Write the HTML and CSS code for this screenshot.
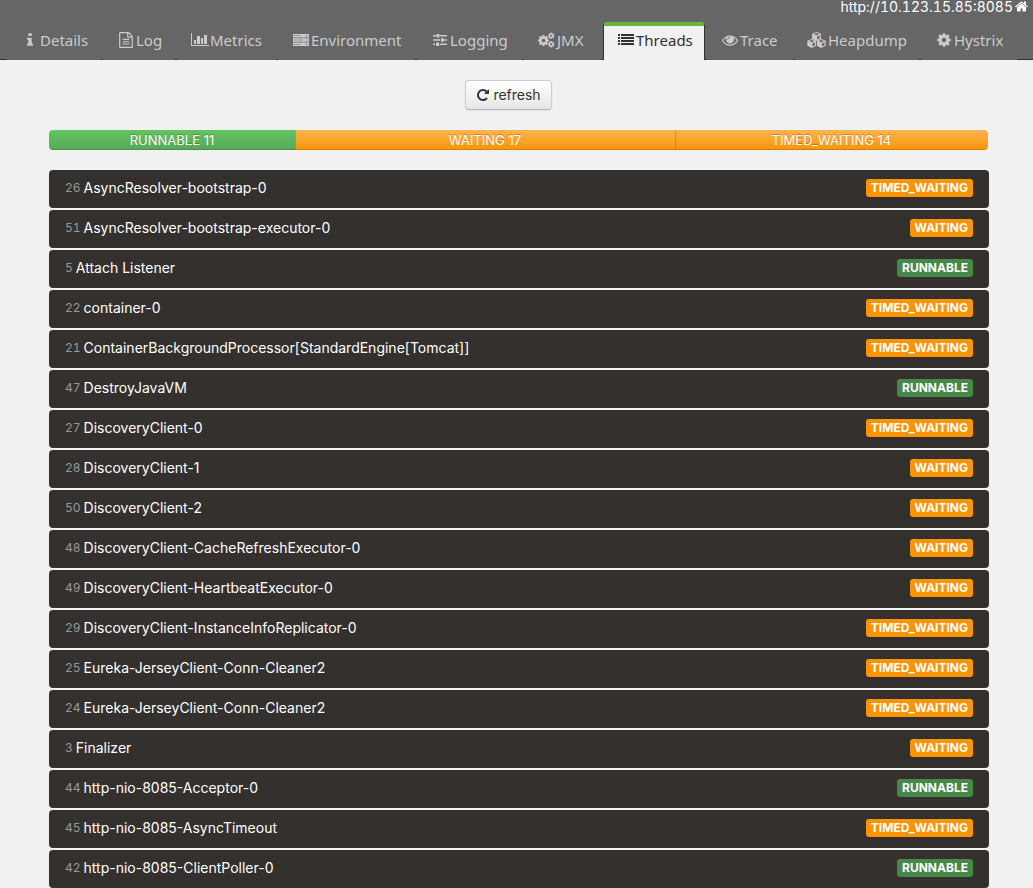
FILE: index.html
```html
<!DOCTYPE html>
<html lang="en">
<head>
<meta charset="utf-8">
<title>Threads</title>
<link rel="stylesheet" href="styles.css">
</head>
<body>
<svg class="sprite" aria-hidden="true">
  <symbol id="home" viewBox="64 150 1664 1500"><path d="M1472 992v480q0 26-19 45t-45 19h-384v-384h-256v384h-384q-26 0-45-19t-19-45v-480q0-1 .5-3t.5-3l575-474 575 474q1 2 1 6zm223-69l-62 74q-8 9-21 11h-3q-13 0-21-7l-692-577-692 577q-12 8-24 7-13-2-21-11l-62-74q-8-10-7-23.5t11-21.5l719-599q32-26 76-26t76 26l244 204v-195q0-14 9-23t23-9h192q14 0 23 9t9 23v408l219 182q10 8 11 21.5t-7 23.5z"/></symbol>
  <symbol id="info" viewBox="0 0 1792 1792"><path d="M1216 1344v128q0 26-19 45t-45 19h-512q-26 0-45-19t-19-45v-128q0-26 19-45t45-19h64v-384h-64q-26 0-45-19t-19-45v-128q0-26 19-45t45-19h384q26 0 45 19t19 45v576h64q26 0 45 19t19 45zm-128-1152v192q0 26-19 45t-45 19h-256q-26 0-45-19t-19-45v-192q0-26 19-45t45-19h256q26 0 45 19t19 45z"/></symbol>
  <symbol id="file" viewBox="0 0 1792 1792"><path d="M1596 380q28 28 48 76t20 88v1152q0 40-28 68t-68 28h-1344q-40 0-68-28t-28-68v-1600q0-40 28-68t68-28h896q40 0 88 20t76 48zm-444-244v376h376q-10-29-22-41l-313-313q-12-12-41-22zm384 1528v-1024h-416q-40 0-68-28t-28-68v-416h-768v1536h1280zm-1024-864q0-14 9-23t23-9h704q14 0 23 9t9 23v64q0 14-9 23t-23 9h-704q-14 0-23-9t-9-23v-64zm736 224q14 0 23 9t9 23v64q0 14-9 23t-23 9h-704q-14 0-23-9t-9-23v-64q0-14 9-23t23-9h704zm0 256q14 0 23 9t9 23v64q0 14-9 23t-23 9h-704q-14 0-23-9t-9-23v-64q0-14 9-23t23-9h704z"/></symbol>
  <symbol id="chart" viewBox="0 0 18 16"><path d="M0 1h1v12h17v1H0zM3 8h2v4H3zM6 4h3v8H6zM10 6h2v6h-2zM13 3h3v9h-3z"/></symbol>
  <symbol id="server" viewBox="0 0 16 16"><path fill-rule="evenodd" d="M0 2h16v3.500H0zM0 6.200h16v3.600H0zM0 10.500h16V14H0zM1 3.500v.6h7v-.6zM1 7.700v.6h9v-.6zM1 12v.6h7V12zM13 3.200v1.200h1.400V3.200zM13 7.400v1.200h1.400V7.400zM13 11.700v1.200h1.400v-1.200z"/></symbol>
  <symbol id="sliders" viewBox="0 0 16 16"><path d="M1 3h3v1.500H1zM8 3h7v1.500H8zM4.500 2h3v3.500h-3zM1 7.300h7v1.500H1zM12.500 7.300H15v1.500h-2.500zM9 6.300h3v3.500H9zM1 11.600h2v1.500H1zM7.500 11.600H15v1.500H7.500zM4 10.600h3v3.500H4z"/></symbol>
  <symbol id="cog" viewBox="0 0 1792 1792"><path d="M1152 896q0-106-75-181t-181-75-181 75-75 181 75 181 181 75 181-75 75-181zm512-109v222q0 12-8 23t-20 13l-185 28q-19 54-39 91 35 50 107 138 10 12 10 25t-9 23q-27 37-99 108t-94 71q-12 0-26-9l-138-108q-44 23-91 38-16 136-29 186-7 28-36 28h-222q-14 0-24.500-8.500t-11.500-21.500l-28-184q-49-16-90-37l-141 107q-10 9-25 9-14 0-25-11-126-114-165-168-7-10-7-23 0-12 8-23 15-21 51-66.500t54-70.500q-27-50-41-99l-183-27q-13-2-21-12.500t-8-23.500v-222q0-12 8-23t19-13l186-28q14-46 39-92-40-57-107-138-10-12-10-24 0-10 9-23 26-36 98.500-107.500t94.500-71.500q13 0 26 10l138 107q44-23 91-38 16-136 29-186 7-28 36-28h222q14 0 24.500 8.500t11.500 21.500l28 184q49 16 90 37l142-107q9-9 24-9 13 0 25 10 129 119 165 170 7 8 7 22 0 12-8 23-15 21-51 66.500t-54 70.500q26 50 41 98l183 28q13 2 21 12.500t8 23.500z"/></symbol>
  <symbol id="cogs" viewBox="0 0 18 16"><use href="#cog" x="-1" y="2" width="13" height="13"/><use href="#cog" x="9.500" y="0" width="7.500" height="7.500"/><use href="#cog" x="9.500" y="8.500" width="7.500" height="7.500"/></symbol>
  <symbol id="list" viewBox="0 0 16 16"><path d="M0 2h2v2H0zM3 2h13v2H3zM0 5h2v2H0zM3 5h13v2H3zM0 8h2v2H0zM3 8h13v2H3zM0 11h2v2H0zM3 11h13v2H3z"/></symbol>
  <symbol id="eye" viewBox="0 0 1792 1792"><path d="M1664 960q-152-236-381-353 61 104 61 225 0 185-131.500 316.500t-316.500 131.500-316.500-131.500-131.500-316.500q0-121 61-225-229 117-381 353 133 205 333.500 326.500t434.500 121.500 434.500-121.500 333.500-326.500zm-720-384q0-20-14-34t-34-14q-125 0-214.500 89.500t-89.500 214.500q0 20 14 34t34 14 34-14 14-34q0-86 61-147t147-61q20 0 34-14t14-34zm848 384q0 34-20 69-140 230-376.500 368.500t-499.500 138.500-499.500-139-376.500-368q-20-35-20-69t20-69q140-229 376.500-368t499.500-139 499.500 139 376.500 368q20 35 20 69z"/></symbol>
  <symbol id="cube" viewBox="0 0 10 10"><path fill-rule="evenodd" d="M5 0l4.900 2v5.500L5 10 .1 7.500V2zM5 1.100L2 2.300 5 3.600l3-1.300zM5.700 5v3.300l2.900-1.500V3.700z"/></symbol>
  <symbol id="cubes" viewBox="0 0 20 16"><use href="#cube" x="5" y="0" width="9" height="9"/><use href="#cube" x="0" y="7" width="9.500" height="9"/><use href="#cube" x="9.500" y="7" width="9.500" height="9"/></symbol>
  <symbol id="repeat" viewBox="0 0 1792 1792"><path d="M1664 256v448q0 26-19 45t-45 19h-448q-42 0-59-40-17-39 14-69l138-138q-148-137-349-137-104 0-198.500 40.500t-163.500 109.500-109.500 163.500-40.500 198.500 40.500 198.500 109.500 163.500 163.500 109.500 198.500 40.500q119 0 225-52t179-147q7-10 23-12 15 0 25 9l137 138q9 8 9.500 20.500t-7.500 22.500q-109 132-264 204.500t-327 72.500q-156 0-298-61t-245-164-164-245-61-298 61-298 164-245 245-164 298-61q147 0 284.500 55.500t244.500 156.500l130-129q29-31 70-14 39 17 39 59z"/></symbol>
</svg>
<header class="header">
  <a class="instance" href="#">http://10.123.15.85:8085<svg class="home-icon"><use href="#home"/></svg></a>
  <nav class="tabs">
    <a class="tab" href="#"><svg class="icon"><use href="#info"/></svg>Details</a>
    <a class="tab" href="#"><svg class="icon"><use href="#file"/></svg>Log</a>
    <a class="tab" href="#"><svg class="icon"><use href="#chart"/></svg>Metrics</a>
    <a class="tab" href="#"><svg class="icon"><use href="#server"/></svg>Environment</a>
    <a class="tab" href="#"><svg class="icon"><use href="#sliders"/></svg>Logging</a>
    <a class="tab" href="#"><svg class="icon"><use href="#cogs"/></svg>JMX</a>
    <a class="tab tab-active" href="#" aria-current="page"><svg class="icon"><use href="#list"/></svg>Threads</a>
    <a class="tab" href="#"><svg class="icon"><use href="#eye"/></svg>Trace</a>
    <a class="tab tab-wide-icon" href="#"><svg class="icon"><use href="#cubes"/></svg>Heapdump</a>
    <a class="tab" href="#"><svg class="icon"><use href="#cog"/></svg>Hystrix</a>
  </nav>
</header>
<main class="main">
  <div class="toolbar"><button class="refresh" type="button"><svg class="refresh-icon"><use href="#repeat"/></svg>refresh</button></div>
  <section class="threads">
    <div class="progress">
      <div class="bar bar-success" style="width:26.19%">RUNNABLE 11</div>
      <div class="bar bar-warning" style="width:40.48%">WAITING 17</div>
      <div class="bar bar-warning" style="width:33.33%">TIMED_WAITING 14</div>
    </div>
    <ul class="list">
      <li><button class="row" type="button"><small class="id">26</small><span class="name">AsyncResolver-bootstrap-0</span><span class="label warning">TIMED_WAITING</span></button></li>
      <li><button class="row" type="button"><small class="id">51</small><span class="name">AsyncResolver-bootstrap-executor-0</span><span class="label warning">WAITING</span></button></li>
      <li><button class="row" type="button"><small class="id">5</small><span class="name">Attach Listener</span><span class="label success">RUNNABLE</span></button></li>
      <li><button class="row" type="button"><small class="id">22</small><span class="name">container-0</span><span class="label warning">TIMED_WAITING</span></button></li>
      <li><button class="row" type="button"><small class="id">21</small><span class="name">ContainerBackgroundProcessor[StandardEngine[Tomcat]]</span><span class="label warning">TIMED_WAITING</span></button></li>
      <li><button class="row" type="button"><small class="id">47</small><span class="name">DestroyJavaVM</span><span class="label success">RUNNABLE</span></button></li>
      <li><button class="row" type="button"><small class="id">27</small><span class="name">DiscoveryClient-0</span><span class="label warning">TIMED_WAITING</span></button></li>
      <li><button class="row" type="button"><small class="id">28</small><span class="name">DiscoveryClient-1</span><span class="label warning">WAITING</span></button></li>
      <li><button class="row" type="button"><small class="id">50</small><span class="name">DiscoveryClient-2</span><span class="label warning">WAITING</span></button></li>
      <li><button class="row" type="button"><small class="id">48</small><span class="name">DiscoveryClient-CacheRefreshExecutor-0</span><span class="label warning">WAITING</span></button></li>
      <li><button class="row" type="button"><small class="id">49</small><span class="name">DiscoveryClient-HeartbeatExecutor-0</span><span class="label warning">WAITING</span></button></li>
      <li><button class="row" type="button"><small class="id">29</small><span class="name">DiscoveryClient-InstanceInfoReplicator-0</span><span class="label warning">TIMED_WAITING</span></button></li>
      <li><button class="row" type="button"><small class="id">25</small><span class="name">Eureka-JerseyClient-Conn-Cleaner2</span><span class="label warning">TIMED_WAITING</span></button></li>
      <li><button class="row" type="button"><small class="id">24</small><span class="name">Eureka-JerseyClient-Conn-Cleaner2</span><span class="label warning">TIMED_WAITING</span></button></li>
      <li><button class="row" type="button"><small class="id">3</small><span class="name">Finalizer</span><span class="label warning">WAITING</span></button></li>
      <li><button class="row" type="button"><small class="id">44</small><span class="name">http-nio-8085-Acceptor-0</span><span class="label success">RUNNABLE</span></button></li>
      <li><button class="row" type="button"><small class="id">45</small><span class="name">http-nio-8085-AsyncTimeout</span><span class="label warning">TIMED_WAITING</span></button></li>
      <li><button class="row" type="button"><small class="id">42</small><span class="name">http-nio-8085-ClientPoller-0</span><span class="label success">RUNNABLE</span></button></li>
    </ul>
  </section>
</main>
</body>
</html>
```

FILE: styles.css
```css
* { box-sizing: border-box; }
body {
  margin: 0;
  background: #f1f1f1;
  color: #34302d;
  font: 14px/20px Inter, "Open Sans", sans-serif;
}
.sprite { position: absolute; width: 0; height: 0; }
svg { fill: currentColor; flex: none; }
button { font: inherit; cursor: pointer; }

.header {
  display: flex;
  flex-direction: column;
  background: #666;
}
.instance {
  display: flex;
  justify-content: flex-end;
  gap: 2px;
  height: 22px;
  padding-right: 5px;
  color: #fff;
  font-size: 14px;
  font-variant-numeric: tabular-nums;
  line-height: 14px;
  text-decoration: none;
}
.home-icon { width: 13px; height: 13px; }
.tabs {
  display: grid;
  grid-template-columns: 94fr 72fr 99fr 137fr 105fr 77fr 102fr 86fr 124fr 96fr;
  gap: 2px;
  padding: 0 16px 0 7px;
  background: linear-gradient(#34302d, #34302d) bottom / 100% 1px no-repeat;
}
.tab {
  display: flex;
  align-items: center;
  gap: 1px;
  height: 38px;
  padding: 0 0 2px 14px;
  background: #666;
  color: #ccc;
  font: 15px/20px "Noto Sans", sans-serif;
  text-decoration: none;
  white-space: nowrap;
}
.tab-active {
  padding: 0 0 6px 13px;
  border: 1px solid #34302d;
  border-top: 4px solid #6db33f;
  border-bottom: 0;
  border-radius: 4px 4px 0 0;
  background: #f1f1f1;
  color: #34302d;
}
.icon { width: 18px; height: 16px; }
.tab-wide-icon { padding-left: 12px; }
.tab-wide-icon .icon { width: 20px; }

.main { padding-top: 20px; }
.toolbar {
  display: flex;
  justify-content: center;
  padding-right: 16px;
}
.refresh {
  display: flex;
  align-items: center;
  gap: 3px;
  height: 30px;
  padding: 0 10px;
  border: 1px solid #ccc;
  border-bottom-color: #b3b3b3;
  border-radius: 4px;
  background: linear-gradient(#fff, #e6e6e6);
  box-shadow: 0 1px 2px rgba(0, 0, 0, .05);
  color: #333;
}
.refresh-icon { width: 14px; height: 14px; }
.threads { padding: 20px 44px 0 49px; }
.progress {
  display: flex;
  height: 20px;
  margin: 0 1px 20px 0;
  overflow: hidden;
  border-radius: 4px;
}
.bar {
  color: #fff;
  font-size: 13px;
  line-height: 20px;
  text-align: center;
  text-shadow: 0 -1px 0 rgba(0, 0, 0, .25);
  box-shadow: inset 0 -1px 0 rgba(0, 0, 0, .15);
}
.bar-success { background: linear-gradient(#62c462, #57a957); }
.bar-warning { background: linear-gradient(#fbb450, #f89406); }
.bar + .bar { box-shadow: inset 1px 0 0 rgba(0, 0, 0, .15), inset 0 -1px 0 rgba(0, 0, 0, .15); }

.list {
  display: flex;
  flex-direction: column;
  gap: 2px;
  margin: 0;
  padding: 0;
  list-style: none;
}
.row {
  display: flex;
  align-items: center;
  gap: 3px;
  width: 100%;
  height: 38px;
  padding: 0 16px 2px;
  border: 0;
  border-radius: 4px;
  background: #34302d;
  color: #fff;
  text-align: left;
}
.id {
  color: #999;
  font-size: 12px;
  font-variant-numeric: tabular-nums;
}
.label {
  margin-left: auto;
  padding: 0 5px;
  border-radius: 3px;
  font-size: 12px;
  font-weight: 700;
  line-height: 18px;
}
.warning { background: #f89406; }
.success { background: #468847; }
```
